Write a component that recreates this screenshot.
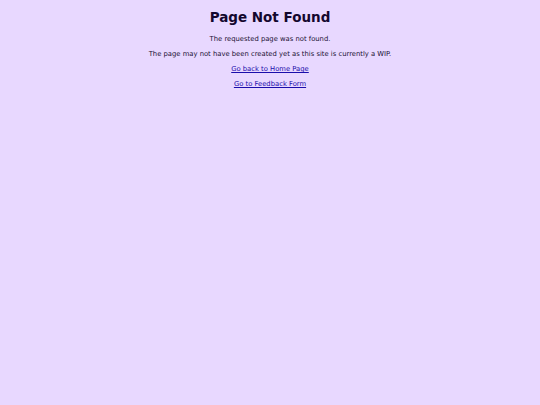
export default function App() {
  return (
    <div className="min-h-[405px] w-full bg-[#e8d8ff] text-center font-['DejaVu_Sans',sans-serif] text-[#1a1033]">
      <h1 className="pt-[10px] text-[13.5px] font-bold leading-[14px] text-[#14072e]">Page Not Found</h1>
      <p className="mt-[10px] text-[6.8px] leading-[10px]">The requested page was not found.</p>
      <p className="mt-[5px] text-[6.8px] leading-[10px]">The page may not have been created yet as this site is currently a WIP.</p>
      <p className="mt-[5px] text-[6.8px] leading-[10px]">
        <a href="#" className="text-[#1a0dab] underline">Go back to Home Page</a>
      </p>
      <p className="mt-[5px] text-[6.8px] leading-[10px]">
        <a href="#" className="text-[#1a0dab] underline">Go to Feedback Form</a>
      </p>
    </div>
  );
}
